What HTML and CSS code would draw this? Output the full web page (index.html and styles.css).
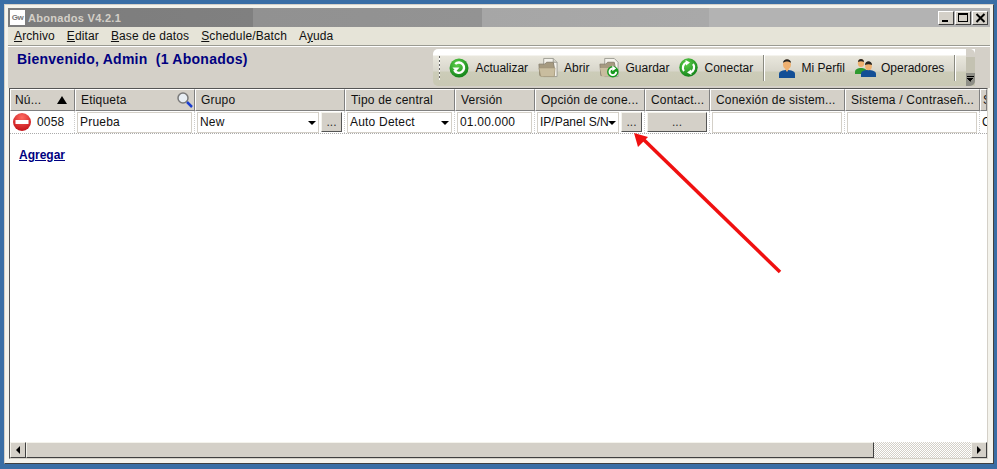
FILE: index.html
```html
<!DOCTYPE html>
<html lang="es">
<head>
<meta charset="utf-8">
<title>Abonados V4.2.1</title>
<link rel="stylesheet" href="styles.css">
</head>
<body>
<div class="window">
  <div class="titlebar">
    <div class="appicon">Gw</div>
    <div class="apptitle">Abonados V4.2.1</div>
    <div class="winbtns">
      <button class="winbtn"><span class="glyph-min"></span></button>
      <button class="winbtn"><span class="glyph-max"></span></button>
      <button class="winbtn"><svg width="11" height="10" viewBox="0 0 11 10"><path d="M1.500 1l8 8M9.500 1l-8 8" stroke="#000" stroke-width="2"/></svg></button>
    </div>
  </div>
  <div class="menubar">
    <span class="menu"><u>A</u>rchivo</span>
    <span class="menu"><u>E</u>ditar</span>
    <span class="menu"><u>B</u>ase de datos</span>
    <span class="menu"><u>S</u>chedule/Batch</span>
    <span class="menu">A<u>y</u>uda</span>
  </div>
  <div class="topbar">
    <div class="welcome">Bienvenido, Admin&nbsp; (1 Abonados)</div>
    <div class="toolbar">
      <span class="grip"></span>
      <span class="tool">
        <svg class="ticon" width="20" height="20" viewBox="0 0 20 20"><defs><radialGradient id="g1" cx="0.400" cy="0.300" r="0.800"><stop offset="0" stop-color="#5cd04a"/><stop offset="1" stop-color="#0b7a14"/></radialGradient></defs><circle cx="10" cy="10" r="9.500" fill="url(#g1)"/><path d="M5.200 12a5.200 5.200 0 1 0 1-6" fill="none" stroke="#fff" stroke-width="2.400"/><path d="M3.500 9.500h7L7 13.500z" fill="#fff"/></svg>
        Actualizar</span>
      <span class="tool">
        <svg class="ticon" width="20" height="21" viewBox="0 0 21 21"><path d="M6 1h10l4 4v15H6z" fill="#f4f2ec" stroke="#9c9c94"/><path d="M16 1v4h4" fill="#d8d6cc" stroke="#9c9c94"/><path d="M1 7h6l2-2h7l1 5v9H2z" fill="#a69a80" stroke="#8a8270"/><path d="M1 11h17l-1 9H3z" fill="#c9bd9f" stroke="#a39878" stroke-width="0.600"/></svg>
        Abrir</span>
      <span class="tool">
        <svg class="ticon" width="20" height="21" viewBox="0 0 21 21"><path d="M6 1h10l4 4v15H6z" fill="#f4f2ec" stroke="#9c9c94"/><path d="M1 7h6l2-2h7l1 5v9H2z" fill="#a69a80" stroke="#8a8270"/><path d="M1 11h17l-1 9H3z" fill="#c9bd9f"/><circle cx="14.500" cy="15" r="6" fill="#169a1e"/><path d="M18 15a3.500 3.500 0 1 1-3.500-3.500" fill="none" stroke="#fff" stroke-width="2"/><path d="M14 8.500l4 3-4 3z" fill="#fff"/></svg>
        Guardar</span>
      <span class="tool">
        <svg class="ticon" width="19" height="19" viewBox="0 0 19 19"><defs><radialGradient id="g2" cx="0.400" cy="0.300" r="0.800"><stop offset="0" stop-color="#5cd04a"/><stop offset="1" stop-color="#0b7a14"/></radialGradient></defs><circle cx="9.500" cy="9.500" r="9.200" fill="url(#g2)"/><path d="M5 13a5.500 5.500 0 0 1 2.500-8.500M14 6a5.500 5.500 0 0 1-2.500 8.500" fill="none" stroke="#fff" stroke-width="2.200"/><path d="M6.500 2l4.500 2.500-4 3zM12.500 17L8 14.500l4-3z" fill="#fff"/></svg>
        Conectar</span>
      <span class="tsep tsep-first"></span>
      <span class="tool">
        <svg class="ticon" width="18" height="22" viewBox="0 0 18 22"><path d="M1 21v-4c0-3 4-4 8-4s8 1 8 4v4z" fill="#134f96"/><path d="M7 12h4l-2 3z" fill="#f0b070"/><ellipse cx="9" cy="7.500" rx="4" ry="5" fill="#eeb070"/><path d="M5 6c0-5 8-5 8 0-2-2-6-2-8 0z" fill="#222"/></svg>
        Mi Perfil</span>
      <span class="tool tool-ops">
        <svg class="ticon" width="22" height="20" viewBox="0 0 22 20"><path d="M0 14c0-3 3-4 6-4s6 1 6 4v2H0z" fill="#2f9a2f"/><ellipse cx="6" cy="5" rx="3.200" ry="4" fill="#eeb070"/><path d="M3 4c0-4 6-4 6 0-2-1-4-1-6 0z" fill="#222"/><path d="M6 19v-3c0-3 3-4 7-4s8 1 8 4v3z" fill="#134f96"/><ellipse cx="13.500" cy="8" rx="3.400" ry="4.200" fill="#eeb070"/><path d="M10 7c0-5 7-5 7 0-2-1-5-1-7 0z" fill="#222"/></svg>
        Operadores</span>
      <span class="tsep"></span>
      <span class="overflow"><span class="ov-arrow"></span></span>
    </div>
  </div>
  <div class="content">
    <div class="head-row">
      <div class="hcell hcell-num"><span>Nú...</span><span class="sort-up"></span></div>
      <div class="hcell hcell-label"><span>Etiqueta</span>
        <svg width="18" height="18" viewBox="0 0 18 18"><circle cx="7" cy="7" r="5" fill="#e8eef4" stroke="#7a7a7a" stroke-width="1.500"/><path d="M11 11l5 5" stroke="#1a3ed0" stroke-width="2.500"/></svg>
      </div>
      <div class="hcell">Grupo</div>
      <div class="hcell">Tipo de central</div>
      <div class="hcell">Versión</div>
      <div class="hcell">Opción de cone...</div>
      <div class="hcell">Contact...</div>
      <div class="hcell">Conexión de sistem...</div>
      <div class="hcell">Sistema / Contraseñ...</div>
      <div class="hcell hcell-last">S</div>
    </div>
    <div class="data-row">
      <div class="dcell dcell-num">
        <svg width="18" height="18" viewBox="0 0 18 18"><defs><radialGradient id="r1" cx="0.500" cy="0.250" r="0.800"><stop offset="0" stop-color="#ff6a60"/><stop offset="1" stop-color="#c00c14"/></radialGradient></defs><circle cx="9" cy="9" r="9" fill="url(#r1)"/><rect x="2.500" y="7" width="13" height="4" fill="#fff"/></svg>
        <span>0058</span>
      </div>
      <div class="dcell"><div class="field">Prueba</div></div>
      <div class="dcell"><div class="field field-select">New<span class="caret"></span></div><button class="dots">...</button></div>
      <div class="dcell"><div class="field field-select">Auto Detect<span class="caret"></span></div></div>
      <div class="dcell"><div class="field">01.00.000</div></div>
      <div class="dcell"><div class="field field-select field-tight">IP/Panel S/N<span class="caret"></span></div><button class="dots">...</button></div>
      <div class="dcell"><button class="dots dots-wide">...</button></div>
      <div class="dcell"><div class="field"></div></div>
      <div class="dcell"><div class="field"></div></div>
      <div class="dcell dcell-last">C</div>
    </div>
    <div class="list-body"><a class="add-link" href="#">Agregar</a></div>
    <div class="hscroll">
      <button class="sbtn"><span class="tri-left"></span></button>
      <div class="thumb"></div>
      <div class="track"></div>
      <button class="sbtn"><span class="tri-right"></span></button>
    </div>
  </div>
</div>
<svg class="annotation" width="997" height="469" viewBox="0 0 997 469"><path d="M780 272L642 138" stroke="#f01010" stroke-width="3.500" fill="none"/><path d="M634 133l14 4-10 10z" fill="#f01010"/></svg>
</body>
</html>
```
FILE: styles.css
```css
* { box-sizing: border-box; }
html, body { margin: 0; padding: 0; }
body {
  width: 997px;
  height: 469px;
  overflow: hidden;
  background: #3a6ea5;
  padding: 4px 3px 5px 4px;
  font-family: "Liberation Sans", Arial, sans-serif;
  font-size: 12px;
  letter-spacing: 0.2px;
  color: #111;
}
.window {
  height: 100%;
  background: #f4f3ec;
  border: 1px solid #d4d0c8;
  border-right-color: #404040;
  border-bottom-color: #404040;
  padding: 3px 3px 4px 3px;
  display: flex;
  flex-direction: column;
}
.titlebar {
  flex: 0 0 19px;
  display: flex;
  align-items: center;
  padding-left: 2px;
  background: linear-gradient(90deg, #7c7c7c 0, #808080 245px, #919191 245px, #939393 474px, #a6a6a6 474px, #a9a9a9 701px, #b3b3b3 701px);
}
.appicon {
  width: 15px;
  height: 15px;
  background: #fff;
  color: #777;
  font-size: 8px;
  font-weight: bold;
  letter-spacing: -0.5px;
  line-height: 16px;
  text-align: center;
  overflow: hidden;
}
.apptitle {
  margin-left: 3px;
  font-size: 11px;
  font-weight: bold;
  color: #d4d0c8;
  letter-spacing: 0.3px;
}
.winbtns { margin-left: auto; display: flex; gap: 1px; padding-right: 2px; }
.winbtn {
  width: 16px;
  height: 14px;
  margin: 0;
  padding: 0;
  background: #d4d0c8;
  border: 1px solid;
  border-color: #fff #404040 #404040 #fff;
  display: flex;
  align-items: center;
  justify-content: center;
}
.glyph-min { width: 6px; height: 2px; background: #000; margin-top: 7px; margin-right: 2px; }
.glyph-max { width: 10px; height: 9px; border: 1px solid #000; border-top-width: 2px; }
.menubar {
  flex: 0 0 19px;
  display: flex;
  align-items: center;
  gap: 12px;
  padding-left: 6px;
  background: #e6e4d8;
  border-bottom: 1px solid #9a9a92;
  letter-spacing: 0.12px;
}
.topbar {
  flex: 0 0 42px;
  display: flex;
  align-items: flex-start;
  background: #d4d0c8;
  border-top: 1px solid #fff;
}
.welcome {
  padding: 4px 0 0 9px;
  font-size: 14px;
  font-weight: bold;
  color: #000080;
  letter-spacing: 0.25px;
  line-height: 16px;
}
.toolbar {
  margin: 2px 15px 0 auto;
  width: 542px;
  height: 37px;
  display: flex;
  align-items: center;
  padding-left: 6px;
  border-radius: 5px 0 0 5px;
  letter-spacing: 0;
  background: linear-gradient(180deg, #fff 0, #fff 6px, #e9e7dd 7px, #d8d6cb 22px, #ccccb8 23px, #c9c8b4 100%);
}
.grip {
  width: 2px;
  height: 24px;
  margin-right: 9px;
  background: repeating-linear-gradient(180deg, #666 0, #666 2px, #fff 2px, #fff 4px);
}
.tool {
  display: flex;
  align-items: center;
  gap: 6px;
  margin-right: 10px;
  white-space: nowrap;
}
.tool-ops { gap: 4px; }
.tsep {
  width: 2px;
  height: 26px;
  background: linear-gradient(90deg, #8a8a80 50%, #fff 50%);
  margin-right: 10px;
}
.tsep-first { margin-right: 13px; }
.overflow {
  margin-left: auto;
  width: 13px;
  height: 37px;
  border-radius: 0 5px 5px 0;
  background: linear-gradient(180deg, #d4d0c8 0, #d4d0c8 8px, #c4c2b2 8px, #c4c2b2 24px, #8e8e86 24px);
  display: flex;
  align-items: flex-end;
  justify-content: center;
  padding-bottom: 4px;
}
.ov-arrow {
  width: 7px;
  height: 6px;
  background: linear-gradient(#000 1px, transparent 1px) top / 100% 2px no-repeat, linear-gradient(45deg, transparent 50%, #000 50%) left bottom / 50% 4px no-repeat, linear-gradient(-45deg, transparent 50%, #000 50%) right bottom / 50% 4px no-repeat;
}
.content {
  flex: 1;
  min-height: 0;
  margin: 0 2px 0 1px;
  display: flex;
  flex-direction: column;
  background: #fff;
  border: 1px solid #555;
  border-bottom-color: #d4d0c8;
  border-right-color: #d4d0c8;
  overflow: hidden;
}
.head-row, .data-row {
  display: grid;
  grid-template-columns: 65px 120px 150px 110px 80px 110px 65px 135px 135px 1fr;
}
.head-row { height: 22px; background: #d4d0c8; }
.hcell {
  padding-left: 5px;
  line-height: 20px;
  border: 1px solid;
  border-color: #fff #808080 #808080 #fff;
  white-space: nowrap;
  overflow: hidden;
  display: flex;
  align-items: center;
  justify-content: space-between;
}
.hcell-num { padding-left: 4px; padding-right: 7px; }
.hcell-last { padding-left: 2px; }
.sort-up {
  width: 0;
  height: 0;
  border-left: 5px solid transparent;
  border-right: 5px solid transparent;
  border-bottom: 8px solid #000;
}
.data-row {
  height: 23px;
  border-bottom: 1px dotted #aaa;
}
.dcell {
  display: flex;
  align-items: center;
  gap: 2px;
  padding: 1px 2px;
  border-right: 1px dotted #ccc;
  overflow: hidden;
  min-width: 0;
}
.dcell-num { gap: 6px; padding-left: 3px; }
.dcell-last { border-right: 0; }
.field {
  flex: 1;
  min-width: 0;
  height: 21px;
  line-height: 19px;
  padding-left: 2px;
  background: #fff;
  border: 1px solid #d4d0c8;
  white-space: nowrap;
  position: relative;
  overflow: hidden;
}
.field-select { padding-right: 12px; }
.field-tight { letter-spacing: 0; }
.caret {
  position: absolute;
  right: 2px;
  top: 8px;
  width: 0;
  height: 0;
  border-left: 4px solid transparent;
  border-right: 4px solid transparent;
  border-top: 4px solid #000;
}
.dots {
  flex: 0 0 21px;
  height: 20px;
  margin: 0;
  padding: 0;
  font: inherit;
  color: #333;
  letter-spacing: 0;
  background: #d4d0c8;
  border: 1px solid;
  border-color: #f4f3ec #555 #555 #f4f3ec;
}
.dots-wide { flex: 1; }
.list-body { flex: 1; padding: 14px 0 0 9px; background: #fff; }
.add-link {
  color: #000080;
  font-weight: bold;
  font-size: 12px;
  letter-spacing: 0;
}
.hscroll {
  flex: 0 0 16px;
  display: flex;
  background: repeating-conic-gradient(#d4d0c8 0 25%, #fff 0 50%) 0 0 / 2px 2px;
}
.sbtn {
  width: 16px;
  margin: 0;
  padding: 0;
  background: #d4d0c8;
  border: 1px solid;
  border-color: #f4f3ec #404040 #404040 #f4f3ec;
  display: flex;
  align-items: center;
  justify-content: center;
}
.tri-left, .tri-right { width: 0; height: 0; border-top: 4px solid transparent; border-bottom: 4px solid transparent; }
.tri-left { border-right: 4px solid #000; }
.tri-right { border-left: 4px solid #000; }
.thumb {
  width: 848px;
  background: #d4d0c8;
  border: 1px solid;
  border-color: #f4f3ec #404040 #404040 #f4f3ec;
}
.track { flex: 1; }
.annotation { position: absolute; left: 0; top: 0; pointer-events: none; }
```
